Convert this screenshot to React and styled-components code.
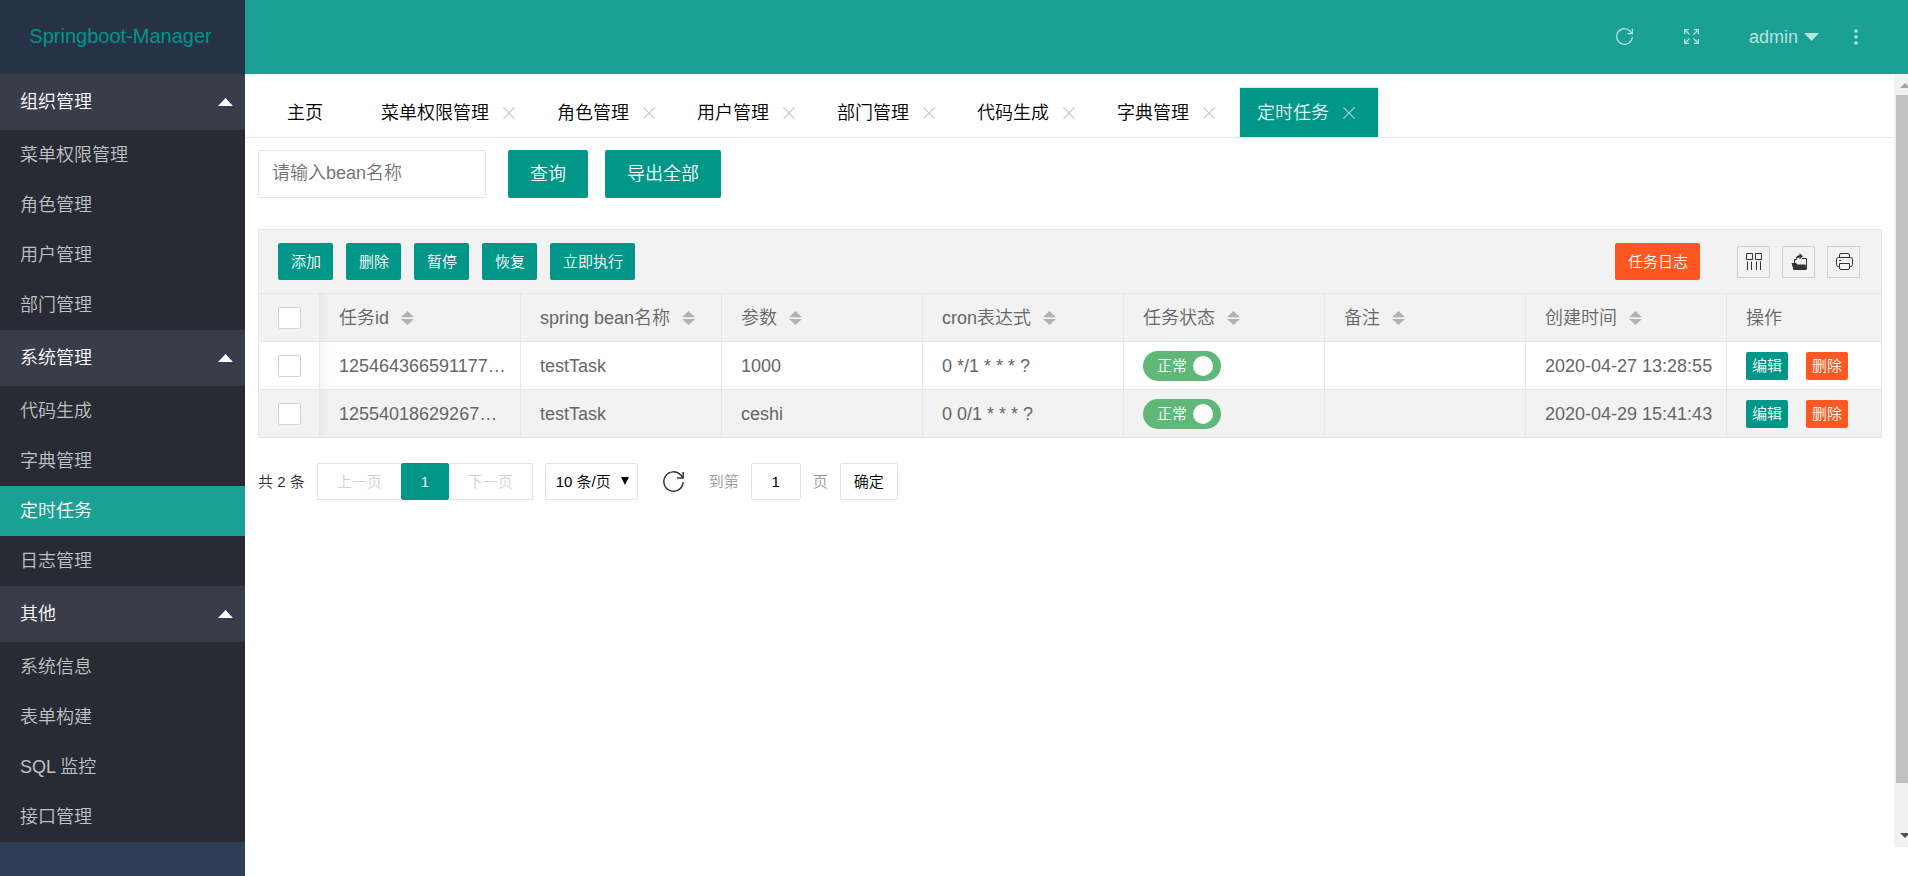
import React from "react";
import styled, { createGlobalStyle, css } from "styled-components";

const Global = createGlobalStyle`
  *, *::before, *::after { box-sizing: border-box; }
  body { margin: 0; background: #fff; color: #666; font-size: 18px; line-height: 24px; }
  body, button, input, select {
    font-family: "Liberation Sans", "Noto Sans CJK SC", sans-serif;
    font-weight: 350;
  }
  a { color: inherit; text-decoration: none; }
  button { cursor: pointer; padding: 0; border: 0; background: none; color: inherit; line-height: 24px; }
  ul { list-style: none; margin: 0; padding: 0; }
`;

const Shell = styled.div`
  display: flex;
  min-height: 100vh;
`;

const Sidebar = styled.nav`
  flex: none;
  width: 245px;
  background: #2f4056;
`;

const Logo = styled.a`
  display: flex;
  align-items: center;
  justify-content: center;
  height: 74px;
  padding: 0 20px 2px 16px;
  background: #263347;
  color: #009688;
  font-size: 20px;
`;

const GroupButton = styled.button`
  display: flex;
  align-items: center;
  justify-content: space-between;
  width: 100%;
  height: 56px;
  padding: 0 12px 0 20px;
  background: #393d49;
  color: #fff;
  font-size: 18px;
`;

const SubList = styled.ul`
  background: #282b33;
`;

const SubLink = styled.a`
  display: flex;
  align-items: center;
  height: 50px;
  padding: 0 20px;
  background: ${(p) => (p.$active ? "#1aa094" : "transparent")};
  color: ${(p) => (p.$active ? "#fff" : "#c0c1c3")};
`;

const Main = styled.div`
  flex: 1;
  min-width: 0;
  display: flex;
  flex-direction: column;
`;

const TopBar = styled.header`
  display: flex;
  align-items: center;
  justify-content: flex-end;
  height: 74px;
  padding: 0 50px 1px 0;
  background: #1aa094;
  color: #bbe3df;
`;

const TopItem = styled.button`
  display: flex;
  align-items: center;
  gap: 6px;
  margin-left: ${(p) => p.$gap}px;
  font-size: 18px;
`;

const Body = styled.div`
  flex: 1;
  display: flex;
`;

const Page = styled.main`
  flex: 1;
  min-width: 0;
`;

const Tabs = styled.div`
  display: flex;
  padding: 13px 13px 0;
  border-bottom: 1px solid #e6e6e6;
`;

const Tab = styled.div`
  display: flex;
  align-items: center;
  gap: 14px;
  height: 50px;
  padding: 0 23px 0 17px;
  border: 1px solid transparent;
  border-bottom: 0;
  color: #000;
  ${(p) =>
    p.$home &&
    css`
      width: 94px;
      margin-right: 11px;
      padding: 0;
      justify-content: center;
    `}
  ${(p) =>
    p.$active &&
    css`
      background: #009688;
      border-color: #e6e6e6;
      color: #e2f3f1;
    `}
`;

const TabClose = styled.button`
  display: flex;
  color: ${(p) => (p.$active ? "#a5d5d0" : "#c6c6c6")};
`;

const Content = styled.div`
  padding: 12px 12px 0 13px;
`;

const SearchForm = styled.form`
  display: flex;
  gap: 17px;
  margin-bottom: 31px;
`;

const SearchInput = styled.input`
  width: 228px;
  height: 48px;
  margin-right: 5px;
  padding: 0 13px 2px;
  border: 1px solid #e6e6e6;
  border-radius: 2px;
  font-size: 18px;
  &::placeholder { color: #757575; }
`;

const sizes = {
  large: css`height: 48px; padding: 0 22px; font-size: 18px;`,
  small: css`height: 37px; padding: 0 12px 0 13px; font-size: 15px;`,
  mini: css`height: 28px; padding: 0 6px; font-size: 15px;`,
};

const Button = styled.button`
  ${(p) => sizes[p.$size]}
  background: ${(p) => (p.$danger ? "#ff5722" : "#009688")};
  border-radius: 2px;
  color: #fff;
  white-space: nowrap;
`;

const TableBox = styled.section`
  border: 1px solid #e6e6e6;
  border-bottom: 0;
`;

const Toolbar = styled.div`
  display: flex;
  align-items: center;
  gap: 13px;
  height: 63px;
  padding: 0 21px 0 19px;
  background: #f2f2f2;
`;

const ToolRight = styled.div`
  display: flex;
  align-items: center;
  gap: 12px;
  margin-left: auto;
`;

const ToolIcon = styled.button`
  display: flex;
  align-items: center;
  justify-content: center;
  width: 33px;
  height: 32px;
  padding-left: 2px;
  border: 1px solid #ccc;
  color: #333;
`;

const IconGroup = styled.div`
  display: flex;
  gap: 12px;
  margin-left: 25px;
`;

const Table = styled.table`
  width: 100%;
  table-layout: fixed;
  border-collapse: separate;
  border-spacing: 0;
`;

const Col = styled.col`
  width: ${(p) => (p.$w ? `${p.$w}px` : "auto")};
`;

const cell = css`
  height: 48px;
  padding: 0 0 0 19px;
  border-right: 1px solid #e6e6e6;
  text-align: left;
  font-weight: 350;
  white-space: nowrap;
  &:last-child { border-right: 0; }
  &:nth-child(2) {
    background-image: linear-gradient(to right, rgba(0, 0, 0, 0.04), transparent 10px);
  }
`;

const Th = styled.th`
  ${cell}
  border-top: 1px solid #e6e6e6;
  border-bottom: 1px solid #e6e6e6;
  height: 49px;
  background-color: #f2f2f2;
`;

const Td = styled.td`
  ${cell}
  border-bottom: 1px solid #e6e6e6;
`;

const Row = styled.tr`
  background: ${(p) => (p.$even ? "#f2f2f2" : "#fff")};
`;

const HeadLabel = styled.span`
  display: flex;
  align-items: center;
  gap: 12px;
`;

const SortButton = styled.button`
  display: flex;
  color: #b2b2b2;
`;

const Check = styled.input`
  appearance: none;
  display: block;
  width: 23px;
  height: 22px;
  margin: 0;
  border: 1px solid #d2d2d2;
  border-radius: 2px;
  background: #fff;
  &:checked { background: #5fb878; }
`;

const Switch = styled.label`
  display: flex;
  align-items: center;
  justify-content: space-between;
  width: 78px;
  height: 30px;
  padding: 0 8px 0 14px;
  border-radius: 15px;
  background: #5fb878;
  color: #fff;
  font-size: 15px;
`;

const SwitchKnob = styled.input`
  appearance: none;
  width: 20px;
  height: 20px;
  margin: 0;
  border-radius: 50%;
  background: #fff;
`;

const Actions = styled.div`
  display: flex;
  gap: 18px;
`;

const Pager = styled.div`
  display: flex;
  align-items: center;
  gap: 12px;
  margin-top: 25px;
  font-size: 15px;
  color: #333;
`;

const PageGroup = styled.div`
  display: flex;
`;

const PageButton = styled.button`
  height: 37px;
  padding: 0 19px;
  border: 1px solid #e2e2e2;
  font-size: 15px;
  color: #d2d2d2;
  &:first-child { border-right: 0; }
  &:last-child { border-left: 0; }
  ${(p) =>
    p.$current &&
    css`
      width: 48px;
      border-color: #009688;
      border-radius: 2px;
      background: #009688;
      color: #fff;
    `}
`;

const SelectBox = styled.div`
  position: relative;
`;

const Select = styled.select`
  appearance: none;
  display: block;
  width: 93px;
  height: 37px;
  padding: 0 10px;
  border: 1px solid #e2e2e2;
  border-radius: 2px;
  background: #fff;
  color: #000;
  font-size: 15px;
`;

const SelectArrow = styled.svg`
  position: absolute;
  right: 9px;
  top: 14px;
  pointer-events: none;
`;

const Refresh = styled.button`
  display: flex;
  margin: 0 13px;
`;

const Jump = styled.label`
  display: flex;
  align-items: center;
  gap: 12px;
  color: #999;
`;

const JumpInput = styled.input`
  width: 50px;
  height: 37px;
  padding: 0;
  border: 1px solid #e2e2e2;
  border-radius: 2px;
  text-align: center;
  font-size: 15px;
  color: #000;
`;

const JumpButton = styled.button`
  width: 58px;
  height: 37px;
  border: 1px solid #e2e2e2;
  border-radius: 2px;
  font-size: 15px;
  color: #000;
`;

const ScrollTrack = styled.div`
  flex: none;
  display: flex;
  flex-direction: column;
  width: 14px;
  margin-bottom: 29px;
  padding: 9px 0 9px 2px;
  background: #f1f1f1;
  overflow: hidden;
`;

const ScrollThumb = styled.div`
  flex: 688;
  margin-top: 7px;
  background: #c1c1c1;
`;

const ScrollRest = styled.div`
  flex: 50;
`;

const ScrollArrow = styled.svg`
  display: block;
  flex: none;
  margin-left: 4px;
`;

const RefreshIcon = ({ size }) => (
  <svg width={size} height={size} viewBox="0 0 20 20" fill="none" stroke="currentColor" strokeWidth="1.4">
    <path d="M19.2 10.6A9.2 9.2 0 1 1 16.9 3.9L18.6 6" />
    <path d="M19.2 1v5.6h-5.8" />
  </svg>
);

const FullscreenIcon = () => (
  <svg width="15" height="15" viewBox="0 0 15 15" fill="none" stroke="currentColor" strokeWidth="1.3">
    <path d="M.7 5V.7H5M10 .7h4.3V5M14.3 10v4.3H10M5 14.3H.7V10" />
    <path d="M1 1l4.6 4.6M14 1L9.4 5.6M14 14l-4.6-4.6M1 14l4.6-4.6" />
  </svg>
);

const DotsIcon = () => (
  <svg width="4" height="16" viewBox="0 0 4 16" fill="currentColor">
    <circle cx="2" cy="2" r="1.7" /><circle cx="2" cy="8" r="1.7" /><circle cx="2" cy="14" r="1.7" />
  </svg>
);

const Triangle = ({ up, width = 15, height = 8 }) => (
  <svg width={width} height={height} viewBox="0 0 14 8" preserveAspectRatio="none" fill="currentColor">
    <path d={up ? "M0 8L7 0l7 8z" : "M0 0l7 8 7-8z"} />
  </svg>
);

const CloseIcon = () => (
  <svg width="12" height="12" viewBox="0 0 12 12" stroke="currentColor" strokeWidth="1.2">
    <path d="M.4.4l11.2 11.2M11.6.4L.4 11.6" />
  </svg>
);

const SortIcon = () => (
  <svg width="13" height="14" viewBox="0 0 13 14" fill="currentColor">
    <path d="M0 6.2L6.500 0 13 6.200zM0 8l6.500 6L13 8z" />
  </svg>
);

const ColumnsIcon = () => (
  <svg width="17" height="17" viewBox="0 0 17 17" fill="none" stroke="currentColor" strokeWidth="1">
    <path d="M.5.5h6v6h-6zM9.500.5h6v6h-6zM1.500 8.500V17M5.500 8.500V17M10.500 8.500V17M14.500 8.500V17" />
  </svg>
);

const ExportIcon = () => (
  <svg width="17" height="17" viewBox="0 0 17 17">
    <path d="M3.500 10V6.500H6M11 5.500h4.500V16" fill="none" stroke="currentColor" />
    <path d="M.5 10h4.500l1.500 1.500H14.500l1 5.500H2.500z" fill="currentColor" />
    <path d="M4.500 6.500C5 3.500 6.500 2.200 8.500 2.200V.3l3.500 3-3.500 3V4.500C7 4.500 5.800 5.200 4.500 6.500z" fill="currentColor" />
  </svg>
);

const PrintIcon = () => (
  <svg width="17" height="17" viewBox="0 0 17 17" fill="none" stroke="currentColor" strokeWidth="1">
    <path d="M3.500 4.500V2a1.500 1.500 0 0 1 1.500-1.500h7A1.500 1.500 0 0 1 13.500 2v2.500" />
    <path d="M3.500 13.500h-1a2 2 0 0 1-2-2V6.500a2 2 0 0 1 2-2h12a2 2 0 0 1 2 2v5a2 2 0 0 1-2 2h-1" />
    <path d="M3.500 10.500h10V15a1.500 1.500 0 0 1-1.500 1.500H5A1.500 1.500 0 0 1 3.500 15zM3 7.500h2" />
  </svg>
);

const groups = [
  { name: "组织管理", items: ["菜单权限管理", "角色管理", "用户管理", "部门管理"] },
  { name: "系统管理", items: ["代码生成", "字典管理", "定时任务", "日志管理"] },
  { name: "其他", items: ["系统信息", "表单构建", "SQL 监控", "接口管理"] },
];
const current = "定时任务";
const tabs = ["菜单权限管理", "角色管理", "用户管理", "部门管理", "代码生成", "字典管理", "定时任务"];
const tools = ["添加", "删除", "暂停", "恢复", "立即执行"];
const heads = ["任务id", "spring bean名称", "参数", "cron表达式", "任务状态", "备注", "创建时间"];
const rows = [
  { id: "125464366591177…", bean: "testTask", param: "1000", cron: "0 */1 * * * ?", time: "2020-04-27 13:28:55" },
  { id: "12554018629267…", bean: "testTask", param: "ceshi", cron: "0 0/1 * * * ?", time: "2020-04-29 15:41:43" },
];

export default function App() {
  return (
    <>
      <Global />
      <Shell>
        <Sidebar>
          <Logo href="#">Springboot-Manager</Logo>
          {groups.map((g) => (
            <div key={g.name}>
              <GroupButton type="button">
                {g.name}
                <Triangle up />
              </GroupButton>
              <SubList>
                {g.items.map((item) => (
                  <li key={item}>
                    <SubLink href="#" $active={item === current}>{item}</SubLink>
                  </li>
                ))}
              </SubList>
            </div>
          ))}
        </Sidebar>
        <Main>
          <TopBar>
            <TopItem type="button" $gap={0} aria-label="刷新"><RefreshIcon size={17} /></TopItem>
            <TopItem type="button" $gap={51} aria-label="全屏"><FullscreenIcon /></TopItem>
            <TopItem type="button" $gap={50}>admin<Triangle /></TopItem>
            <TopItem type="button" $gap={35} aria-label="更多"><DotsIcon /></TopItem>
          </TopBar>
          <Body>
            <Page>
              <Tabs>
                <Tab $home>主页</Tab>
                {tabs.map((t) => (
                  <Tab key={t} $active={t === current}>
                    {t}
                    <TabClose type="button" $active={t === current} aria-label="关闭"><CloseIcon /></TabClose>
                  </Tab>
                ))}
              </Tabs>
              <Content>
                <SearchForm onSubmit={(e) => e.preventDefault()}>
                  <SearchInput type="text" placeholder="请输入bean名称" aria-label="bean名称" />
                  <Button type="submit" $size="large">查询</Button>
                  <Button type="button" $size="large">导出全部</Button>
                </SearchForm>
                <TableBox>
                  <Toolbar>
                    {tools.map((t) => (
                      <Button key={t} type="button" $size="small">{t}</Button>
                    ))}
                    <ToolRight>
                      <Button type="button" $size="small" $danger>任务日志</Button>
                      <IconGroup>
                        <ToolIcon type="button" aria-label="筛选列"><ColumnsIcon /></ToolIcon>
                        <ToolIcon type="button" aria-label="导出"><ExportIcon /></ToolIcon>
                        <ToolIcon type="button" aria-label="打印"><PrintIcon /></ToolIcon>
                      </IconGroup>
                    </ToolRight>
                  </Toolbar>
                  <Table>
                    <colgroup>
                      <Col $w={61} />
                      {heads.map((h) => <Col key={h} $w={201} />)}
                      <Col />
                    </colgroup>
                    <thead>
                      <tr>
                        <Th><Check type="checkbox" aria-label="全选" /></Th>
                        {heads.map((h) => (
                          <Th key={h}>
                            <HeadLabel>
                              {h}
                              <SortButton type="button" aria-label="排序"><SortIcon /></SortButton>
                            </HeadLabel>
                          </Th>
                        ))}
                        <Th>操作</Th>
                      </tr>
                    </thead>
                    <tbody>
                      {rows.map((r, i) => (
                        <Row key={r.id} $even={i % 2 === 1}>
                          <Td><Check type="checkbox" aria-label="选择" /></Td>
                          <Td>{r.id}</Td>
                          <Td>{r.bean}</Td>
                          <Td>{r.param}</Td>
                          <Td>{r.cron}</Td>
                          <Td>
                            <Switch>
                              正常
                              <SwitchKnob type="checkbox" role="switch" defaultChecked />
                            </Switch>
                          </Td>
                          <Td />
                          <Td>{r.time}</Td>
                          <Td>
                            <Actions>
                              <Button type="button" $size="mini">编辑</Button>
                              <Button type="button" $size="mini" $danger>删除</Button>
                            </Actions>
                          </Td>
                        </Row>
                      ))}
                    </tbody>
                  </Table>
                </TableBox>
                <Pager>
                  <span>共 2 条</span>
                  <PageGroup>
                    <PageButton type="button">上一页</PageButton>
                    <PageButton type="button" $current>1</PageButton>
                    <PageButton type="button">下一页</PageButton>
                  </PageGroup>
                  <SelectBox>
                    <Select aria-label="每页条数" defaultValue="10">
                      <option value="10">10 条/页</option>
                      <option value="20">20 条/页</option>
                    </Select>
                    <SelectArrow width="8" height="8" viewBox="0 0 8 8"><path d="M0 0h8L4 8z" /></SelectArrow>
                  </SelectBox>
                  <Refresh type="button" aria-label="刷新"><RefreshIcon size={21} /></Refresh>
                  <Jump>
                    到第
                    <JumpInput type="text" defaultValue="1" />
                    页
                  </Jump>
                  <JumpButton type="button">确定</JumpButton>
                </Pager>
              </Content>
            </Page>
            <ScrollTrack aria-hidden="true">
              <ScrollArrow width="10" height="5" viewBox="0 0 10 5" fill="#a3a3a3"><path d="M0 5l5-5 5 5z" /></ScrollArrow>
              <ScrollThumb />
              <ScrollRest />
              <ScrollArrow width="10" height="5" viewBox="0 0 10 5" fill="#505050"><path d="M0 0l5 5 5-5z" /></ScrollArrow>
            </ScrollTrack>
          </Body>
        </Main>
      </Shell>
    </>
  );
}
